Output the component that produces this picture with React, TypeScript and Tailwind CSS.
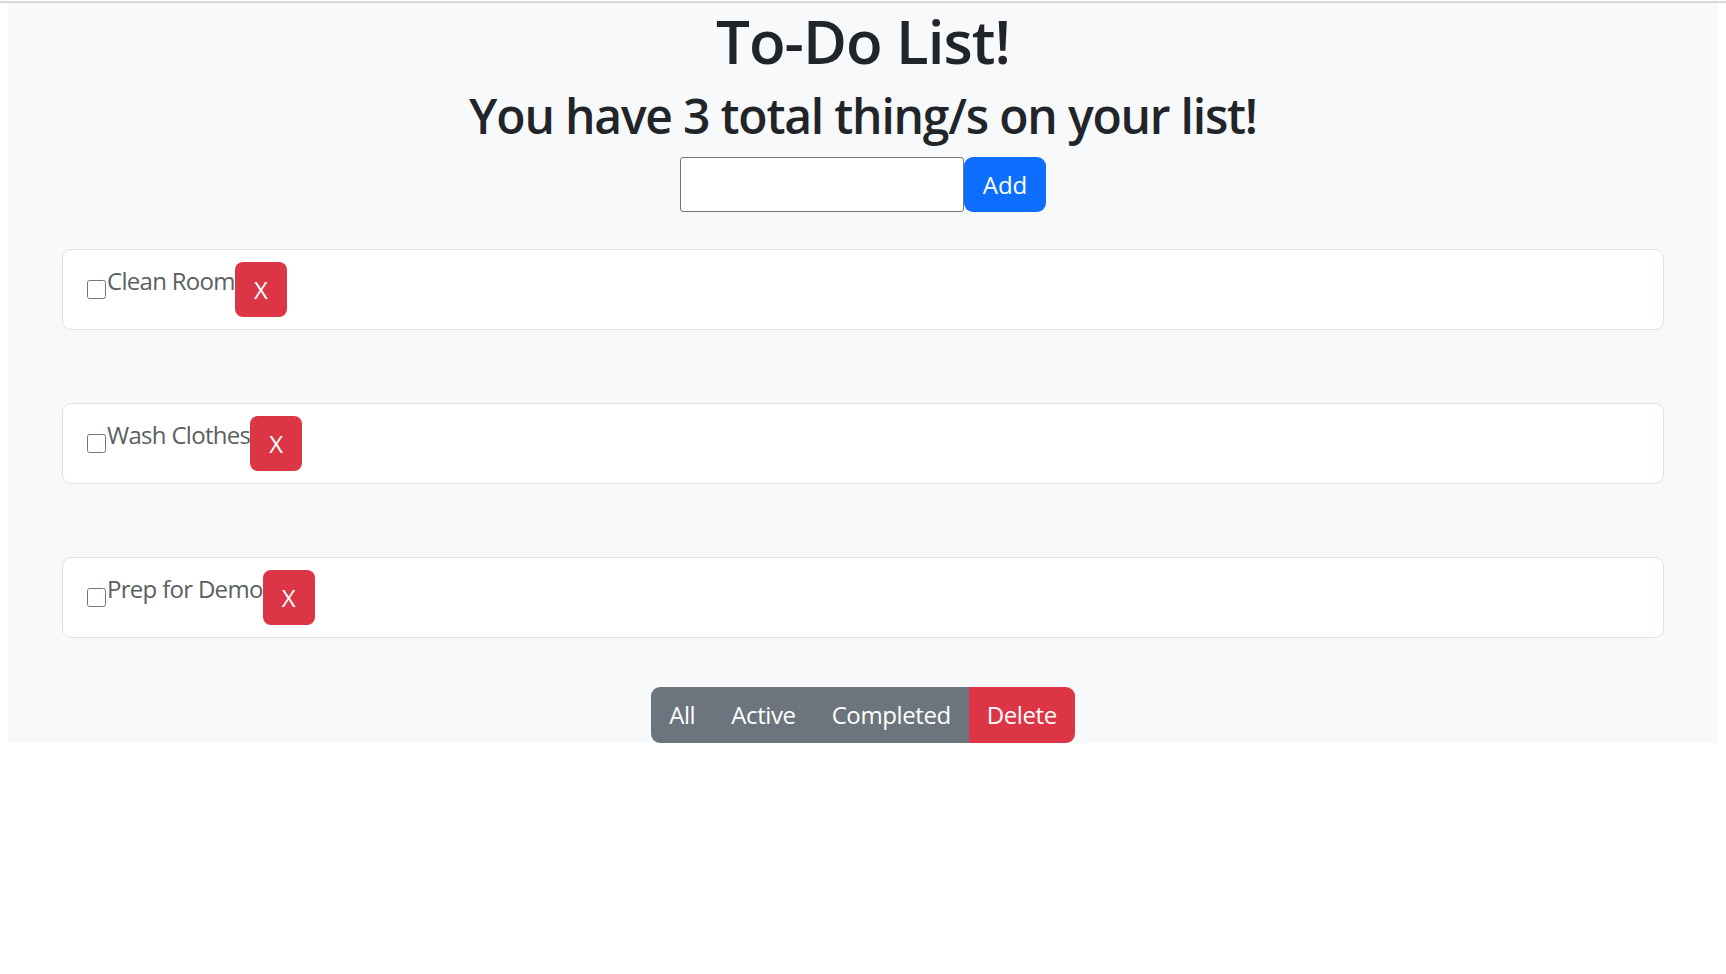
import React from "react"

const todos = ["Clean Room", "Wash Clothes", "Prep for Demo"]

export default function App() {
  return (
    <div className="min-h-screen bg-white text-[#212529]" style={{ fontFamily: '"Open Sans", "Noto Sans", sans-serif' }}>
      <div className="mt-px h-[2px] bg-[#d9d9dc]" />
      <div className="mx-2 bg-[#f8f9fa]">
        <h1 className="text-center text-[60px] leading-[72px] font-semibold tracking-[-1px] pt-[2px] mb-[10px]">To-Do List!</h1>
        <h2 className="text-center text-[48px] leading-[58px] font-semibold tracking-[-1.2px] mb-3">You have 3 total thing/s on your list!</h2>
        <div className="flex justify-center">
          <input type="text" className="w-[284px] h-[55px] bg-white border border-[#767676] rounded-[3px]" />
          <button className="h-[55px] w-[82px] bg-[#0d6efd] text-white text-[24px] rounded-[9px]">Add</button>
        </div>

        <div className="px-[54px] mt-[37px]">
          {todos.map((t, i) => (
            <div key={t} className={"bg-white border border-[#dee2e6] rounded-[9px] h-[81px] pl-6 py-3 flex items-start " + (i > 0 ? "mt-[73px]" : "")}>
              <input type="checkbox" className="self-center w-[19px] h-[19px] m-0 mr-[1px]" />
              <span className="text-[24px] leading-[36px] text-[#5c5f62] tracking-[-0.7px] pt-px">{t}</span>
              <button className="h-[55px] w-[52px] bg-[#dc3545] text-white text-[24px] rounded-[8px]">X</button>
            </div>
          ))}
        </div>

        <div className="flex justify-center mt-[49px]">
          <div className="flex h-[56px] rounded-[9px] overflow-hidden text-white text-[24px] tracking-[-0.4px]">
            <button className="px-[18px] bg-[#6c757d]">All</button>
            <button className="px-[18px] bg-[#6c757d]">Active</button>
            <button className="px-[18px] bg-[#6c757d]">Completed</button>
            <button className="px-[18px] bg-[#dc3545]">Delete</button>
          </div>
        </div>
      </div>
    </div>
  )
}
